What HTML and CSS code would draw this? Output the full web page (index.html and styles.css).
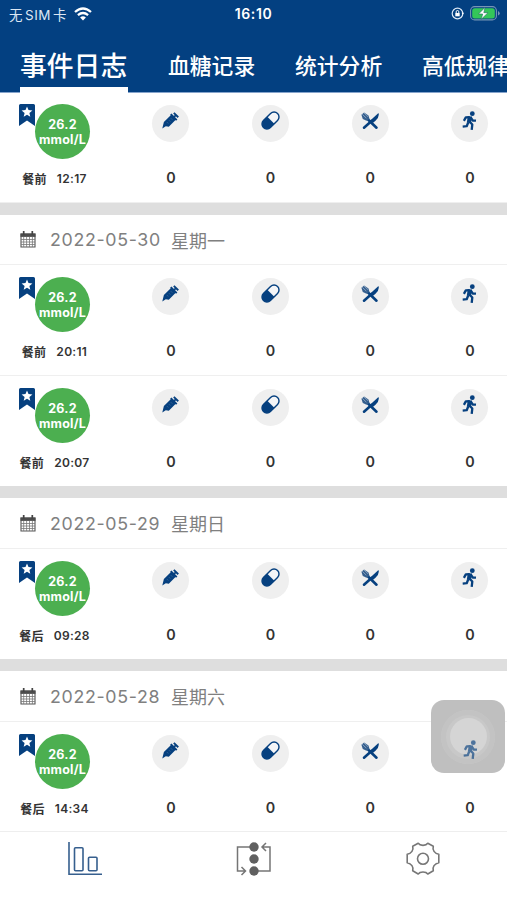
FILE: index.html
```html
<!DOCTYPE html>
<html lang="zh-CN">
<head>
<meta charset="utf-8">
<meta name="viewport" content="width=device-width, initial-scale=1">
<title>事件日志</title>
<link rel="stylesheet" href="styles.css">
</head>
<body>
<svg class="defs" aria-hidden="true">
  <symbol id="flag" viewBox="0 0 16 22"><path fill="#06407f" d="M1.5 0h13Q16 0 16 1.500V22L8 16.500 0 22V1.500Q0 0 1.500 0z"/><path fill="#fff" d="M8 2.600l1.500 3.500 3.900.300-3 2.500.900 3.800L8 10.700l-3.300 2 .900-3.800-3-2.500 3.900-.300z"/></symbol>
  <symbol id="syringe" viewBox="0 0 18 18"><path d="M.3 17.500L2 10.500 9.800 3 14.800 8 7.200 15.500 4 15.200z" fill="#06407f"/><path d="M9.300 2.200l6.300 6.500M11.800 6.200l3.400-3.500M12.500.9l4.700 4.700" stroke="#06407f" stroke-width="2"/><path d="M5 10.500l1.700 1.700M7.200 8.500l1.700 1.700M9.300 6.500l1.700 1.700" stroke="#4d779f" stroke-width=".6"/></symbol>
  <symbol id="pill" viewBox="0 0 20 20"><g transform="rotate(45 10 10)"><rect x="4.800" y="-.5" width="10.400" height="21" rx="5.200" fill="#f4f5f7" stroke="#06407f" stroke-width="1.500"/><path d="M4.800 9.500h10.400v5.800a5.200 5.200 0 0 1-10.400 0z" fill="#06407f"/></g></symbol>
  <symbol id="food" viewBox="0 0 18 18"><path d="M6 6.500L15.500 15.700" stroke="#06407f" stroke-width="2.600" stroke-linecap="round"/><path d="M.4 2.800L3.100.4 7.500 3.500 8.500 7 5.500 8.800 1.800 7z" fill="#355f8e"/><path d="M1.300 2.300l4 3.800M3 1l4 3.700" stroke="#b9c8d8" stroke-width=".6"/><path d="M17.500 1q1.200 4-3 7.700L11.800 11 9 8.700z" fill="#06407f"/><path d="M10.500 9L3 15.700" stroke="#06407f" stroke-width="2.600" stroke-linecap="round"/></symbol>
  <symbol id="run" viewBox="0 0 15 20"><circle cx="10.300" cy="2.700" r="2.400" fill="#06407f"/><path d="M7.500 10.500l2.800 3-.6 5.300M6.200 11.500l-1.500 3.700-4 .4M7.800 6.200l-4 .2-1.900 3.500M8.700 6.500l2 3 3.300.2" fill="none" stroke="#06407f" stroke-width="2.300" stroke-linejoin="round"/><path d="M5.800 5.200l4.300.3-1.300 7-4-1z" fill="#06407f"/></symbol>
  <symbol id="calendar" viewBox="0 0 16 17"><path d="M1 3h14v13H1z" fill="#fff" stroke="#555" stroke-width="1.100"/><path d="M.5 2.500h15v3.400H.5z" fill="#4c4c4c"/><path d="M3.700 0v4M12.300 0v4" stroke="#444" stroke-width="1.700"/><path d="M3.700 6v10M6.600 6v10M9.500 6v10M12.400 6v10M1 8.500h14M1 11h14M1 13.500h14" stroke="#777" stroke-width=".8"/></symbol>
</svg>
<div class="app">
  <header class="header">
    <div class="status">
      <div class="carrier"><span>无<b>SIM</b>卡</span>
        <svg width="18" height="14" viewBox="0 0 18 14"><g fill="none" stroke="#fff" stroke-width="2.300"><path d="M1 5q8-7 16 0M3.900 8.200q5.100-4.300 10.200 0"/></g><path d="M9 13.500l-2.900-3q2.900-2.300 5.800 0z" fill="#fff"/></svg>
      </div>
      <div class="clock">16:10</div>
      <div class="power">
        <svg width="13" height="13" viewBox="0 0 13 13"><circle cx="6.500" cy="6.500" r="5.300" fill="none" stroke="#dbe7f5" stroke-width="1.200"/><path d="M4.300 6h4.400v3.300H4.300z" fill="#fff"/><path d="M5.200 6V4.800a1.300 1.300 0 0 1 2.600 0V6" fill="none" stroke="#fff"/><path d="M10.500 5.800h2.500l-1.200 2z" fill="#fff"/></svg>
        <svg width="30" height="15" viewBox="0 0 30 15"><rect x=".6" y=".6" width="25.800" height="13.300" rx="4" fill="none" stroke="#7795b5" stroke-width="1.100"/><rect x="2.200" y="2.200" width="22.600" height="10.200" rx="2.500" fill="#34c759"/><path d="M28 5v4.600q1.700-.7 1.700-2.300T28 5" fill="#7795b5"/><path d="M15 1.500L8.500 8h4.200l-1.500 5.300L18 6.700h-4.200z" fill="#fff" stroke="#266d63" stroke-width=".6"/></svg>
      </div>
    </div>
    <nav class="tabs"><a class="tab active">事件日志</a><a class="tab">血糖记录</a><a class="tab">统计分析</a><a class="tab">高低规律</a></nav>
  </header>
  <main>
    <section class="day">
      <article class="row lined">
        <div class="reading"><div class="badge"><svg class="flag"><use href="#flag"/></svg><div class="value">26.2<br>mmol/L</div></div><div class="time"><span>餐前</span><span>12:17</span></div></div>
        <div class="metric"><i><svg class="syringe"><use href="#syringe"/></svg></i><b>0</b></div>
        <div class="metric"><i><svg class="pill"><use href="#pill"/></svg></i><b>0</b></div>
        <div class="metric"><i><svg class="food"><use href="#food"/></svg></i><b>0</b></div>
        <div class="metric"><i><svg class="run"><use href="#run"/></svg></i><b>0</b></div>
      </article>
    </section>
    <section class="day">
      <h2 class="date first"><svg><use href="#calendar"/></svg><span class="num">2022-05-30</span><span>星期一</span></h2>
      <article class="row lined">
        <div class="reading"><div class="badge"><svg class="flag"><use href="#flag"/></svg><div class="value">26.2<br>mmol/L</div></div><div class="time"><span>餐前</span><span>20:11</span></div></div>
        <div class="metric"><i><svg class="syringe"><use href="#syringe"/></svg></i><b>0</b></div>
        <div class="metric"><i><svg class="pill"><use href="#pill"/></svg></i><b>0</b></div>
        <div class="metric"><i><svg class="food"><use href="#food"/></svg></i><b>0</b></div>
        <div class="metric"><i><svg class="run"><use href="#run"/></svg></i><b>0</b></div>
      </article>
      <article class="row">
        <div class="reading"><div class="badge"><svg class="flag"><use href="#flag"/></svg><div class="value">26.2<br>mmol/L</div></div><div class="time"><span>餐前</span><span>20:07</span></div></div>
        <div class="metric"><i><svg class="syringe"><use href="#syringe"/></svg></i><b>0</b></div>
        <div class="metric"><i><svg class="pill"><use href="#pill"/></svg></i><b>0</b></div>
        <div class="metric"><i><svg class="food"><use href="#food"/></svg></i><b>0</b></div>
        <div class="metric"><i><svg class="run"><use href="#run"/></svg></i><b>0</b></div>
      </article>
    </section>
    <section class="day">
      <h2 class="date"><svg><use href="#calendar"/></svg><span class="num">2022-05-29</span><span>星期日</span></h2>
      <article class="row">
        <div class="reading"><div class="badge"><svg class="flag"><use href="#flag"/></svg><div class="value">26.2<br>mmol/L</div></div><div class="time"><span>餐后</span><span>09:28</span></div></div>
        <div class="metric"><i><svg class="syringe"><use href="#syringe"/></svg></i><b>0</b></div>
        <div class="metric"><i><svg class="pill"><use href="#pill"/></svg></i><b>0</b></div>
        <div class="metric"><i><svg class="food"><use href="#food"/></svg></i><b>0</b></div>
        <div class="metric"><i><svg class="run"><use href="#run"/></svg></i><b>0</b></div>
      </article>
    </section>
    <section class="day">
      <h2 class="date"><svg><use href="#calendar"/></svg><span class="num">2022-05-28</span><span>星期六</span></h2>
      <article class="row">
        <div class="reading"><div class="badge"><svg class="flag"><use href="#flag"/></svg><div class="value">26.2<br>mmol/L</div></div><div class="time"><span>餐后</span><span>14:34</span></div></div>
        <div class="metric"><i><svg class="syringe"><use href="#syringe"/></svg></i><b>0</b></div>
        <div class="metric"><i><svg class="pill"><use href="#pill"/></svg></i><b>0</b></div>
        <div class="metric"><i><svg class="food"><use href="#food"/></svg></i><b>0</b></div>
        <div class="metric"><i><svg class="run"><use href="#run"/></svg></i><b>0</b></div>
      </article>
    </section>
  </main>
  <nav class="bottom">
    <a><svg width="34" height="34" viewBox="0 0 34 34" fill="none" stroke="#365f8e" stroke-width="1.600"><path d="M1 0v32.200h33"/><rect x="6.500" y="5.700" width="8.500" height="23" rx="1"/><rect x="20.500" y="15.200" width="8.500" height="13.500" rx="1"/></svg></a>
    <a><svg width="36" height="34" viewBox="0 0 36 34" fill="none" stroke="#757575" stroke-width="1.500"><path d="M18 5H1.500v24H9M5.500 25l4 4-4 4M18 29h16V5h-8M30 1l-4 4 4 4"/><g fill="#606060" stroke="none"><circle cx="18" cy="5" r="4.700"/><circle cx="18" cy="17" r="4.700"/><circle cx="18" cy="29" r="4.700"/></g></svg></a>
    <a><svg width="34" height="34" viewBox="0 0 34 34" fill="none" stroke="#777" stroke-width="1.600" stroke-linejoin="round"><path d="M12.200 1.300C14 4 20 4 21.800 1.300L27.300 4.300C26.200 8 28.500 11.500 32.800 12.300V20.700C28.500 21.500 26.200 25 27.300 28.700L21.800 32C20 29.300 14 29.300 12.200 32L6.700 28.700C7.800 25 5.500 21.500 1.200 20.700V12.300C5.500 11.500 7.800 8 6.700 4.300z"/><circle cx="17" cy="16.700" r="5.500"/></svg></a>
  </nav>
  <div class="assist"><span class="ring"></span><span class="dot"></span><svg class="run"><use href="#run"/></svg></div>
</div>
</body>
</html>
```
FILE: styles.css
```css
* { box-sizing: border-box; }
body { margin: 0; background: #fff; font-family: Inter, "Noto Sans CJK SC", sans-serif; color: #333; }
svg { display: block; flex: none; }
.defs { position: absolute; width: 0; height: 0; }
.app { position: relative; width: 507px; height: 900px; overflow: hidden; display: flex; flex-direction: column; }
.header { height: 93px; flex: none; background: #034081; color: #fff; display: flex; flex-direction: column; border-bottom: 1px solid #86a4cc; }
.status { height: 27px; flex: none; display: grid; grid-template-columns: 1fr auto 1fr; align-items: center; padding: 0 7px 0 9px; }
.carrier { display: flex; align-items: center; gap: 7px; font-size: 13.500px; letter-spacing: .5px; white-space: nowrap; color: #dce7f3; }
.carrier b { font-weight: 400; margin: 0 2px; }
.clock { font-size: 14px; font-weight: 600; letter-spacing: .6px; margin-right: 2px; }
.power { display: flex; justify-content: flex-end; align-items: center; gap: 6px; }
.tabs { height: 66px; flex: none; display: flex; padding-left: 20px; white-space: nowrap; }
.tab { flex: none; width: 87px; height: 66px; margin-right: 40px; font-size: 21.8px; font-weight: 500; line-height: 79px; }
.tab.active { width: 108px; font-size: 26.800px; line-height: 79px; border-bottom: 6px solid #fff; }
main { height: 738px; flex: none; overflow: hidden; }
.day + .day { border-top: 12px solid #dedede; }
.date { height: 51px; margin: 0; padding: 0 0 0 20px; display: flex; align-items: center; border-bottom: 1px solid #efefef; font-size: 18px; font-weight: 400; color: #808080; }
.date.first { height: 50px; }
.date svg { width: 16px; height: 17px; margin-right: 14px; }
.date .num { width: 121px; font-size: 17.800px; letter-spacing: .68px; }
.row { height: 110px; display: grid; grid-template-columns: 121px repeat(4, 99.700px); padding-top: 12px; }
.row.lined { height: 111px; border-bottom: 1px solid #efefef; }
.day:first-child .row { height: 110px; padding-top: 11px; }
.reading { display: flex; flex-direction: column; }
.badge { display: flex; padding-left: 19px; }
.flag { width: 16px; height: 22px; }
.value { width: 55px; height: 55px; border-radius: 50%; background: #4caf50; color: #fff; font-size: 12.500px; font-weight: 700; line-height: 15px; letter-spacing: .2px; text-align: center; padding-top: 13px; white-space: nowrap; }
.time { width: 109px; height: 20px; margin-top: 9px; display: flex; justify-content: center; align-items: center; gap: 10px; font-size: 12px; font-weight: 600; letter-spacing: .3px; }
.metric { display: flex; flex-direction: column; align-items: center; }
.metric i { width: 37px; height: 37px; margin-top: .5px; border-radius: 50%; background: #efefef; display: flex; justify-content: center; padding-top: 7px; }
.metric b { font-size: 14.300px; font-weight: 600; line-height: 20px; margin-top: 26.500px; }
.syringe { width: 17px; height: 17px; }
.pill { width: 19px; height: 19px; margin-top: -1px; }
.food { width: 18px; height: 18px; }
.run { width: 15px; height: 20px; }
.metric .run { margin-top: -1px; }
.bottom { flex: 1; border-top: 1px solid #eee; display: grid; grid-template-columns: repeat(3, 169px); justify-items: center; padding-top: 10px; background: #fff; }
.assist { position: absolute; left: 431px; top: 700px; width: 74px; height: 73px; border-radius: 13px; background: #bfbfbf; overflow: hidden; }
.ring { position: absolute; left: 10px; top: 10px; width: 54px; height: 54px; border-radius: 50%; background: #c8c8c8; box-shadow: inset 0 0 0 5px #c3c3c3; }
.dot { position: absolute; left: 19px; top: 18px; width: 37px; height: 37px; border-radius: 50%; background: #d5d5d5; }
.assist .run { position: absolute; left: 32px; top: 40px; opacity: .65; }
```
